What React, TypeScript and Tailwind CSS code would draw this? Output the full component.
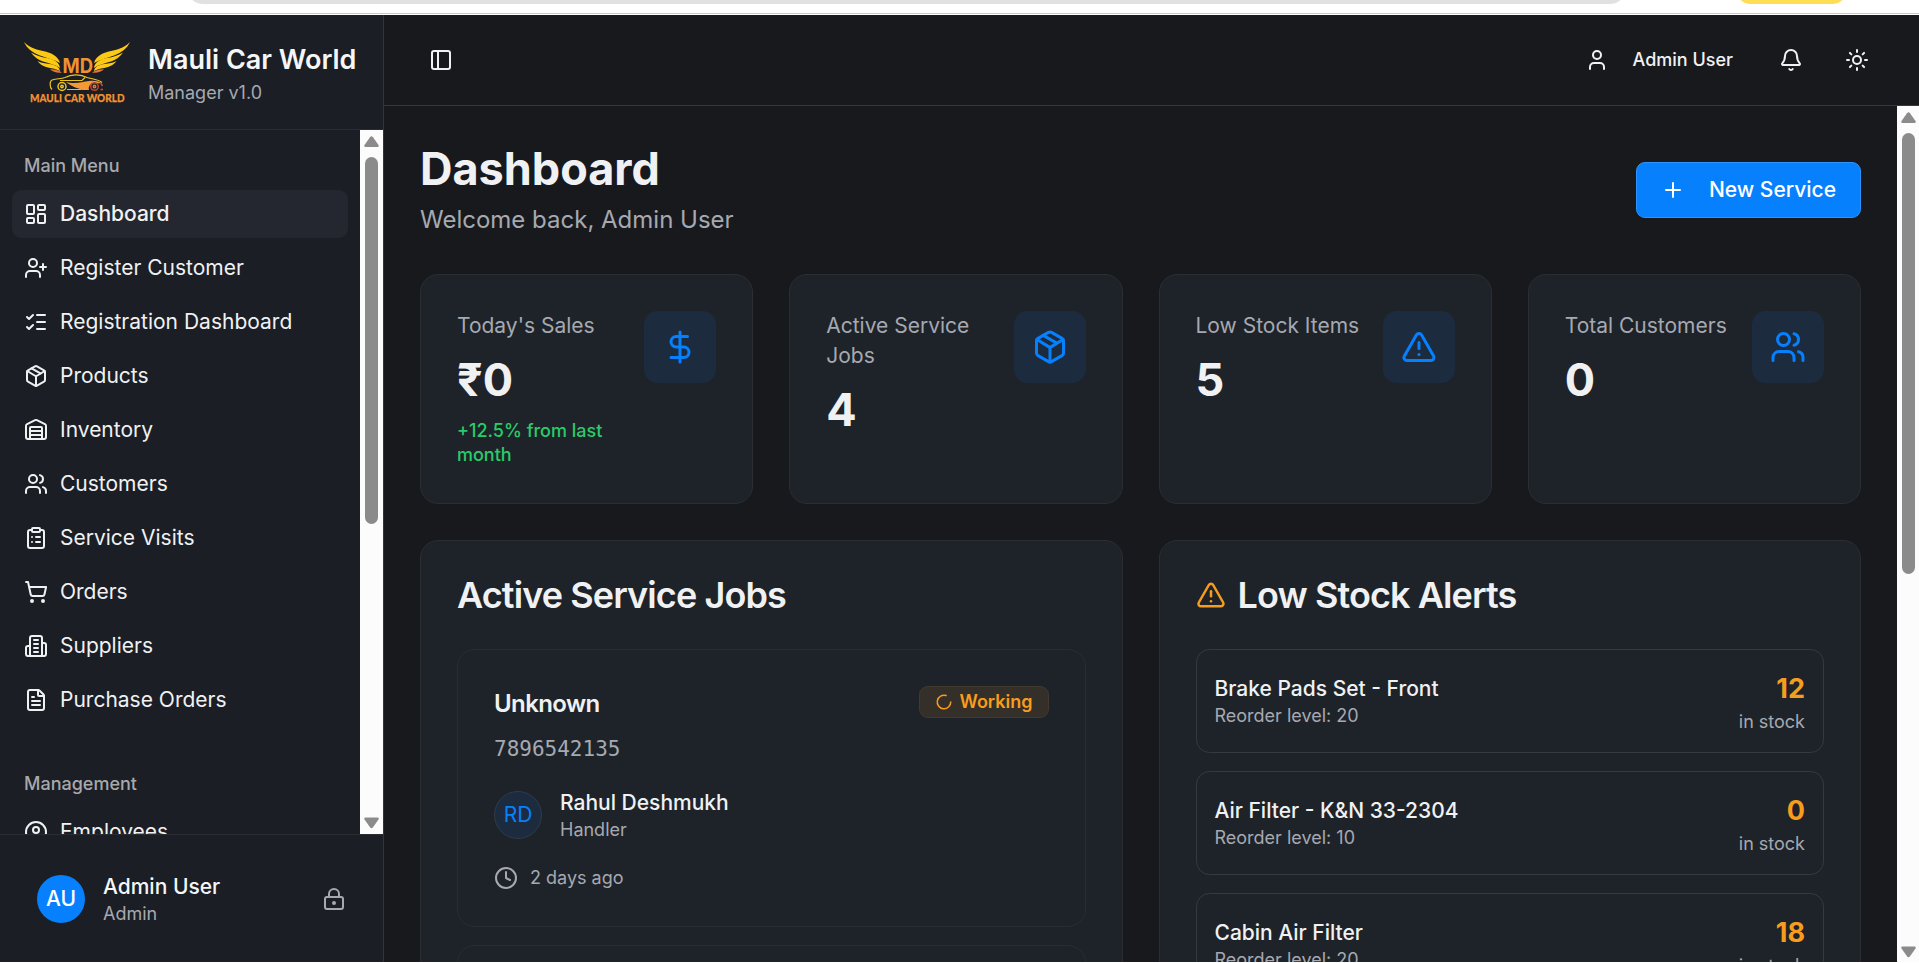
import type { ComponentType, ReactNode } from "react";
import {
  Bell,
  CircleUser,
  ClipboardList,
  Clock,
  DollarSign,
  FileText,
  LayoutDashboard,
  ListChecks,
  LoaderCircle,
  LockKeyhole,
  PanelLeft,
  Plus,
  ShoppingCart,
  Sun,
  TriangleAlert,
  User,
  UserPlus,
  Users,
  Warehouse,
} from "lucide-react";

type Icon = ComponentType<{ className?: string }>;

function PackageIcon({ className }: { className?: string }) {
  return (
    <svg viewBox="0 0 24 24" fill="none" stroke="currentColor" strokeWidth="2" strokeLinecap="round" strokeLinejoin="round" className={className}>
      <path d="M11 21.73a2 2 0 0 0 2 0l7-4A2 2 0 0 0 21 16V8a2 2 0 0 0-1-1.73l-7-4a2 2 0 0 0-2 0l-7 4A2 2 0 0 0 3 8v8a2 2 0 0 0 1 1.73z" />
      <path d="M12 22V12" />
      <path d="m3.3 7 7.703 4.734a2 2 0 0 0 1.994 0L20.7 7" />
      <path d="m7.5 4.27 9 5.15" />
    </svg>
  );
}

function SuppliersIcon({ className }: { className?: string }) {
  return (
    <svg viewBox="0 0 24 24" fill="none" stroke="currentColor" strokeWidth="2" strokeLinecap="round" strokeLinejoin="round" className={className}>
      <path d="M6 22V4a2 2 0 0 1 2-2h8a2 2 0 0 1 2 2v18Z" />
      <path d="M6 12H4a2 2 0 0 0-2 2v6a2 2 0 0 0 2 2h2" />
      <path d="M18 9h2a2 2 0 0 1 2 2v9a2 2 0 0 1-2 2h-2" />
      <path d="M10 6h4M10 10h4M10 14h4M10 18h4" />
    </svg>
  );
}

const mainMenu: { label: string; icon: Icon }[] = [
  { label: "Dashboard", icon: LayoutDashboard },
  { label: "Register Customer", icon: UserPlus },
  { label: "Registration Dashboard", icon: ListChecks },
  { label: "Products", icon: PackageIcon },
  { label: "Inventory", icon: Warehouse },
  { label: "Customers", icon: Users },
  { label: "Service Visits", icon: ClipboardList },
  { label: "Orders", icon: ShoppingCart },
  { label: "Suppliers", icon: SuppliersIcon },
  { label: "Purchase Orders", icon: FileText },
];

const stats: { label: string; value: string; icon: Icon; trend?: string }[] = [
  { label: "Today's Sales", value: "₹0", icon: DollarSign, trend: "+12.5% from last month" },
  { label: "Active Service Jobs", value: "4", icon: PackageIcon },
  { label: "Low Stock Items", value: "5", icon: TriangleAlert },
  { label: "Total Customers", value: "0", icon: Users },
];

const alerts = [
  { name: "Brake Pads Set - Front", level: 20, stock: 12 },
  { name: "Air Filter - K&N 33-2304", level: 10, stock: 0 },
  { name: "Cabin Air Filter", level: 20, stock: 18 },
];

function Wing() {
  return (
    <g>
      <path d="M0 0C4 4.500 10 7 19 9C28 11 34 14 36 21C30 17.500 23 16 16 13.500C8 10.500 3 6.500 0 0Z" />
      <path d="M7 10.500C12 13.500 17 15 23 16C30 17.300 35 20 36.200 26C31 22.500 25 21.500 19 19.500C14 17.500 10 15 7 10.500Z" />
      <path d="M13.500 19C17 20.800 21 21.500 25.500 22C31 22.800 35 24.500 36.200 29C31 26.500 27 26.700 22 25.100C18.500 24 15.500 22 13.500 19Z" />
      <path fill="#e8743b" d="M26 27.300C30 27.200 34 27.800 38 30.500C33 31.200 29 30 26 27.300Z" />
    </g>
  );
}

function Logo() {
  return (
    <svg viewBox="0 0 107 66" className="h-[66px] w-[107px] shrink-0">
      <g fill="#fcc914" transform="translate(0 3)">
        <Wing />
        <g transform="translate(106 0) scale(-1 1)">
          <Wing />
        </g>
      </g>
      <text x="38.500" y="34" textLength="30.500" lengthAdjust="spacingAndGlyphs" fill="#ef9331" fontFamily="Inter" fontWeight="700" fontSize="19.500">
        MD
      </text>
      <g fill="none" stroke="#e9c41f" strokeWidth="1.200">
        <path d="M28 50.500C25.500 48 25.500 42 28 41C33 39.500 37 40 41 38.500C47 35.500 56 34.500 63 38.500C69 40 75 40.500 78 43.500" />
        <path d="M36 41.500H58L61 38.500M43 50.500H57" />
      </g>
      <path fill="#f39a35" d="M42 43C51 45.500 58 43 65 42C70 41 76 42.500 78 44.500L72 44C67 43.500 64 47 65 51H58C54 49 48 48 42 43Z" />
      <g fill="none" strokeWidth="1.500">
        <circle cx="38" cy="47.500" r="4" stroke="#e9c41f" />
        <circle cx="38" cy="47.500" r="1.200" stroke="#e9c41f" />
        <circle cx="70.500" cy="47.500" r="3.800" stroke="#b9472c" />
        <circle cx="70.500" cy="47.500" r="1.200" stroke="#e8743b" />
        <path d="M76.500 50.500H79M77 44.500L78.500 47" stroke="#d2492c" />
      </g>
      <text x="6" y="62.700" textLength="94.500" lengthAdjust="spacingAndGlyphs" fill="#ef9331" stroke="#ef9331" strokeWidth=".25" fontFamily="Lato" fontWeight="900" fontSize="12">
        MAULI CAR WORLD
      </text>
    </svg>
  );
}

function ScrollTrack({ className, children }: { className: string; children: ReactNode }) {
  return (
    <div className={`flex h-full shrink-0 flex-col items-center bg-[#fcfcfc] pt-1.5 ${className}`}>
      <svg viewBox="0 0 15 12" className="h-3 w-[15px] shrink-0 fill-[#8b8b8b]">
        <path d="M6 1.200Q7.500-.8 9 1.200L14.500 9Q15.300 11 13.500 11H1.500Q-.3 11 .5 9Z" />
      </svg>
      {children}
      <svg viewBox="0 0 15 12" className="mt-auto h-3 w-[15px] shrink-0 fill-[#8b8b8b]">
        <path d="M6 10.300Q7.500 12.300 9 10.300L14.500 2.500Q15.300.5 13.500.5H1.500Q-.3.5 .5 2.500Z" />
      </svg>
    </div>
  );
}

function NavItem({ label, icon: IconCmp, active }: { label: string; icon: Icon; active?: boolean }) {
  return (
    <div className={`flex h-12 shrink-0 items-center gap-3 rounded-[9px] px-3 text-[21px] leading-[30px] ${active ? "bg-[#24272f] font-medium" : ""}`}>
      <IconCmp className="size-6 shrink-0" />
      <span>{label}</span>
    </div>
  );
}

function NavHeading({ children }: { children: ReactNode }) {
  return <div className="flex h-12 items-center px-3 pb-px text-[18px] leading-6 font-medium text-[#a8a9ac]">{children}</div>;
}

function Sidebar() {
  return (
    <aside className="flex w-96 shrink-0 flex-col border-r border-[#33353b] bg-[#1b1e25]">
      <div className="flex h-[115px] shrink-0 items-center gap-[17px] border-b border-[#292c33] px-6">
        <Logo />
        <div className="whitespace-nowrap">
          <div className="text-[27px] leading-[42px] font-semibold text-[#f5f6f7]">Mauli Car World</div>
          <div className="text-[18px] leading-6 text-[#a6a9b1]">Manager v1.0</div>
        </div>
      </div>
      <div className="flex min-h-0 flex-1">
        <nav className="flex min-w-0 flex-1 flex-col gap-9 overflow-hidden p-3">
          <div className="flex shrink-0 flex-col">
            <NavHeading>Main Menu</NavHeading>
            <div className="flex flex-col gap-1.5">
              {mainMenu.map((m, i) => (
                <NavItem key={m.label} {...m} active={i === 0} />
              ))}
            </div>
          </div>
          <div className="flex shrink-0 flex-col">
            <NavHeading>Management</NavHeading>
            <NavItem label="Employees" icon={CircleUser} />
          </div>
        </nav>
        <ScrollTrack className="w-[23px] pb-[5px]">
          <div className="mt-[9px] h-[367px] w-[13px] shrink-0 rounded-full bg-[#8b8b8b]" />
        </ScrollTrack>
      </div>
      <div className="flex h-32 shrink-0 items-center gap-[18px] border-t border-[#292c33] px-[37px]">
        <div className="flex size-12 items-center justify-center rounded-full bg-[#0780fe] text-[21px] font-medium text-white">AU</div>
        <div className="flex-1">
          <div className="text-[21px] leading-[30px] font-medium text-[#f5f6f7]">Admin User</div>
          <div className="text-[18px] leading-6 text-[#a6a9b1]">Admin</div>
        </div>
        <LockKeyhole className="size-6 text-[#a6a9b1]" />
      </div>
    </aside>
  );
}

function TopBar() {
  return (
    <header className="flex h-[91px] shrink-0 items-center border-b border-[#36383d] pr-[50px] pl-[45px]">
      <PanelLeft className="size-6" />
      <User className="ml-auto size-6" />
      <span className="ml-6 pb-px text-[18px] leading-6 font-medium">Admin User</span>
      <Bell className="ml-[46px] size-6" />
      <Sun className="ml-[42px] size-6" />
    </header>
  );
}

function StatCard({ label, value, icon: IconCmp, trend }: (typeof stats)[number]) {
  return (
    <div className="flex min-h-[230px] items-start justify-between gap-4 rounded-[18px] border border-[#2b2e33] bg-[#1e2329] p-9">
      <div className="flex flex-1 flex-col gap-3">
        <div className="text-[21px] leading-[30px] text-[#a6a9b1]">{label}</div>
        <div className="text-[45px] leading-[54px] font-bold">{value}</div>
        {trend && <div className="text-[18px] leading-6 font-medium text-[#2acb6a]">{trend}</div>}
      </div>
      <div className="flex size-[72px] shrink-0 items-center justify-center rounded-[13.5px] bg-[#1c2b3e] text-[#0780fe]">
        <IconCmp className="size-9" />
      </div>
    </div>
  );
}

function JobCard() {
  return (
    <div className="flex shrink-0 flex-col rounded-[18px] border border-[#292c33] p-9">
      <div className="flex items-start justify-between">
        <div className="text-2xl leading-9 font-semibold tracking-tight">Unknown</div>
        <div className="flex h-8 items-center gap-1.5 rounded-[9px] border border-[#413a32] bg-[#342f29] px-[15px] text-[18px] leading-6 font-semibold text-[#f79d1e]">
          <LoaderCircle className="size-[18px]" />
          <span className="pb-px">Working</span>
        </div>
      </div>
      <div className="mt-3 font-['DejaVu_Sans_Mono',monospace] text-[21px] leading-[30px] text-[#a6a9b1]">7896542135</div>
      <div className="mt-6 flex items-center gap-[18px]">
        <div className="flex size-12 items-center justify-center rounded-full border border-[#2d3b4c] bg-[#1c2b3e] text-[21px] text-[#0780fe]">RD</div>
        <div>
          <div className="text-[21px] leading-[30px] font-medium">Rahul Deshmukh</div>
          <div className="text-[18px] leading-6 text-[#a6a9b1]">Handler</div>
        </div>
      </div>
      <div className="mt-6 flex items-center gap-3 text-[18px] leading-6 text-[#a6a9b1]">
        <Clock className="size-6" />
        2 days ago
      </div>
    </div>
  );
}

function AlertRow({ name, level, stock }: (typeof alerts)[number]) {
  return (
    <div className="flex h-[104px] shrink-0 items-center justify-between rounded-[13.5px] border border-[#363941] px-[18px]">
      <div>
        <div className="text-[21px] leading-[30px] font-medium">{name}</div>
        <div className="text-[18px] leading-6 text-[#a6a9b1]">Reorder level: {level}</div>
      </div>
      <div className="text-right">
        <div className="text-[27px] leading-[42px] font-bold text-[#f79d1e]">{stock}</div>
        <div className="text-[18px] leading-6 text-[#a6a9b1]">in stock</div>
      </div>
    </div>
  );
}

export default function App() {
  return (
    <div className="flex h-[963px] w-full flex-col overflow-hidden bg-white font-['Inter',sans-serif] text-[#f0f1f3]">
      <div className="h-3.5 shrink-0 border-b border-[#c9c9c9]">
        <div className="flex h-1 items-end overflow-hidden">
          <div className="ml-[187px] h-8 w-[1439px] rounded-full bg-[#e1e1e1]" />
          <div className="ml-[109px] h-8 w-[113px] rounded-full bg-[#ffdd55]" />
        </div>
      </div>
      <div className="mt-px mb-px flex min-h-0 flex-1 bg-[#18191d]">
        <Sidebar />
        <div className="flex min-w-0 flex-1 flex-col">
          <TopBar />
          <div className="flex min-h-0 flex-1">
            <main className="flex min-w-0 flex-1 flex-col gap-9 overflow-hidden px-9 pt-9">
              <div className="flex shrink-0 items-center justify-between">
                <div>
                  <h1 className="text-[45px] leading-[54px] font-bold">Dashboard</h1>
                  <p className="mt-1.5 text-2xl leading-9 text-[#a6a9b1]">Welcome back, Admin User</p>
                </div>
                <button className="flex h-14 items-center gap-6 rounded-[9px] border border-[#2d93fd] bg-[#0780fe] px-6 text-[21px] font-medium text-white">
                  <Plus className="size-6" />
                  New Service
                </button>
              </div>
              <div className="grid shrink-0 grid-cols-4 gap-9">
                {stats.map((s) => (
                  <StatCard key={s.label} {...s} />
                ))}
              </div>
              <div className="grid shrink-0 grid-cols-2 gap-9">
                <section className="flex flex-col gap-9 rounded-[18px] border border-[#2b2e33] bg-[#1e2329] p-9">
                  <h2 className="text-4xl leading-9 font-semibold tracking-tight">Active Service Jobs</h2>
                  <div className="flex flex-col gap-[18px]">
                    <JobCard />
                    <JobCard />
                  </div>
                </section>
                <section className="flex flex-col gap-9 rounded-[18px] border border-[#2b2e33] bg-[#1e2329] p-9">
                  <h2 className="flex items-center gap-3 text-4xl leading-9 font-semibold tracking-tight">
                    <TriangleAlert className="size-[30px] text-[#f79d1e]" />
                    Low Stock Alerts
                  </h2>
                  <div className="flex flex-col gap-[18px]">
                    {alerts.map((a) => (
                      <AlertRow key={a.name} {...a} />
                    ))}
                  </div>
                </section>
              </div>
            </main>
            <ScrollTrack className="w-[22px] pb-1">
              <div className="mt-[9px] h-[441px] w-[13px] shrink-0 rounded-full bg-[#8b8b8b]" />
            </ScrollTrack>
          </div>
        </div>
      </div>
    </div>
  );
}
